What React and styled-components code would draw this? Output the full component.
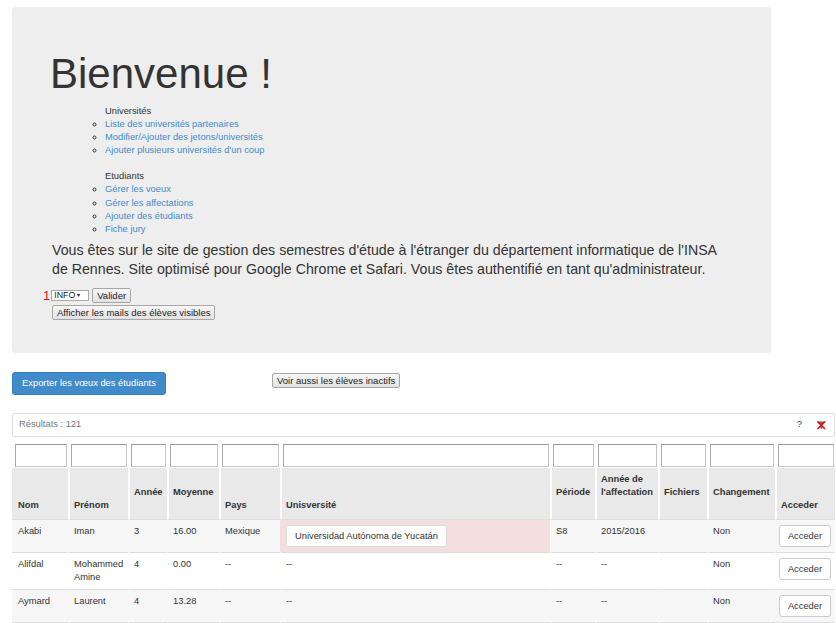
import React from "react";
import styled, { createGlobalStyle } from "styled-components";

const GlobalStyle = createGlobalStyle`
  * { box-sizing: border-box; }
  html { overflow: hidden; }
  html, body { margin: 0; padding: 0; background: #fff; }
  body {
    font-family: "Liberation Sans", Arial, sans-serif;
    font-size: 9.33px;
    line-height: 13.33px;
    color: #333;
  }
`;

const menu = [
  {
    title: "Universités",
    links: [
      "Liste des universités partenaires",
      "Modifier/Ajouter des jetons/universités",
      "Ajouter plusieurs universités d'un coup",
    ],
  },
  {
    title: "Etudiants",
    links: [
      "Gérer les voeux",
      "Gérer les affectations",
      "Ajouter des étudiants",
      "Fiche jury",
    ],
  },
];

const columns = [
  { label: "Nom", width: 56 },
  { label: "Prénom", width: 60 },
  { label: "Année", width: 39, raised: true },
  { label: "Moyenne", width: 52, raised: true },
  { label: "Pays", width: 61 },
  { label: "Unisversité", width: 270 },
  { label: "Période", width: 45, raised: true },
  { label: "Année de l'affectation", width: 63, raised: true },
  { label: "Fichiers", width: 49, raised: true },
  { label: "Changement", width: 68, raised: true },
  { label: "Acceder", width: 60 },
];

const students = [
  { nom: "Akabi", prenom: "Iman", annee: "3", moyenne: "16.00", pays: "Mexique", univ: "Universidad Autónoma de Yucatán", periode: "S8", affectation: "2015/2016", changement: "Non" },
  { nom: "Alifdal", prenom: "Mohammed Amine", annee: "4", moyenne: "0.00", pays: "--", univ: null, periode: "--", affectation: "--", changement: "Non" },
  { nom: "Aymard", prenom: "Laurent", annee: "4", moyenne: "13.28", pays: "--", univ: null, periode: "--", affectation: "--", changement: "Non" },
];

function ClearFilterIcon() {
  return (
    <svg width="11" height="10" viewBox="0 0 11 10">
      <path d="M1 1.5h8.5L6.3 5.2V9L4.3 8V5.2z" fill="#666" />
      <path d="M1.5 1.5l7.5 7.5M9 1.5L1.5 9" stroke="#e3101b" strokeWidth="1.7" />
    </svg>
  );
}

function App() {
  return (
    <Page>
      <GlobalStyle />
      <Jumbotron>
        <Title>Bienvenue !</Title>
        <Menu>
          {menu.map((group) => (
            <Group key={group.title}>
              <GroupTitle>{group.title}</GroupTitle>
              <LinkList>
                {group.links.map((l) => (
                  <li key={l}>
                    <a href="#">{l}</a>
                  </li>
                ))}
              </LinkList>
            </Group>
          ))}
        </Menu>
        <Lead>
          Vous êtes sur le site de gestion des semestres d'étude à l'étranger du
          département informatique de l'INSA de Rennes. Site optimisé pour Google
          Chrome et Safari. Vous êtes authentifié en tant qu'administrateur.
        </Lead>
        <Controls>
          <ControlRow>
            <Marker>1</Marker>
            <SelectBox>
              INFO <Caret>▾</Caret>
            </SelectBox>
            <NativeButton>Valider</NativeButton>
          </ControlRow>
          <ControlRow>
            <NativeButton>Afficher les mails des élèves visibles</NativeButton>
          </ControlRow>
        </Controls>
      </Jumbotron>

      <ActionsBar>
        <PrimaryButton>Exporter les vœux des étudiants</PrimaryButton>
        <NativeButton>Voir aussi les élèves inactifs</NativeButton>
      </ActionsBar>

      <ResultsPanel>
        <ResultsCount>Résultats : 121</ResultsCount>
        <PanelTools>
          <Help>?</Help>
          <ClearFilterIcon />
        </PanelTools>
      </ResultsPanel>

      <Table>
        <colgroup>
          {columns.map((c) => (
            <col key={c.label} style={{ width: c.width }} />
          ))}
        </colgroup>
        <thead>
          <tr>
            {columns.map((c) => (
              <FilterCell key={c.label}>
                <FilterInput />
              </FilterCell>
            ))}
          </tr>
          <tr>
            {columns.map((c) => (
              <HeadCell key={c.label} $raised={c.raised}>
                {c.label === "Année de l'affectation" ? (
                  <>
                    Année de
                    <br />
                    l'affectation
                  </>
                ) : (
                  c.label
                )}
              </HeadCell>
            ))}
          </tr>
        </thead>
        <tbody>
          {students.map((s, i) => (
            <Row key={s.nom} $striped={i % 2 === 0}>
              <Cell>{s.nom}</Cell>
              <Cell>{s.prenom}</Cell>
              <Cell>{s.annee}</Cell>
              <Cell>{s.moyenne}</Cell>
              <Cell>{s.pays}</Cell>
              <Cell $danger={!!s.univ}>
                {s.univ ? <UnivTag>{s.univ}</UnivTag> : "--"}
              </Cell>
              <Cell>{s.periode}</Cell>
              <Cell>{s.affectation}</Cell>
              <Cell />
              <Cell>{s.changement}</Cell>
              <Cell $tight>
                <DefaultButton>Acceder</DefaultButton>
              </Cell>
            </Row>
          ))}
        </tbody>
      </Table>
    </Page>
  );
}

export default App;

const Page = styled.div`
  width: 836px;
  padding: 7px 0 0 12px;
  overflow: hidden;
`;

const Jumbotron = styled.div`
  width: 759px;
  background: #eeeeee;
  border-radius: 4px;
  padding: 44px 40px 33px 40px;
`;

const Title = styled.h1`
  margin: 0 0 8px -2px;
  font-size: 42px;
  line-height: 46px;
  font-weight: normal;
  color: #333;
`;

const Menu = styled.div`
  margin-left: 53px;
  line-height: 13.1px;
  display: flex;
  flex-direction: column;
  gap: 13px;
`;

const Group = styled.div``;

const GroupTitle = styled.div`
  color: #333;
`;

const LinkList = styled.ul`
  margin: 0;
  padding: 0;
  list-style: circle;

  a {
    color: #428bca;
    text-decoration: none;
  }
`;

const Lead = styled.p`
  max-width: 676px;
  margin: 5px 0 8px;
  font-size: 14.2px;
  line-height: 19.5px;
  color: #333;
`;

const Controls = styled.div`
  display: flex;
  flex-direction: column;
  gap: 2px;
`;

const ControlRow = styled.div`
  display: flex;
  align-items: center;
  gap: 3px;
`;

const Marker = styled.span`
  margin-left: -9px;
  margin-right: -2px;
  font-size: 13px;
  line-height: 1;
  color: #e3101b;
`;

const SelectBox = styled.div`
  display: inline-flex;
  align-items: center;
  gap: 2px;
  height: 11px;
  width: 38px;
  padding: 0 2px;
  background: #fff;
  border: 1px solid #a9a9a9;
  font-size: 8.8px;
  line-height: 1;
  color: #222;
`;

const Caret = styled.span`
  font-size: 6px;
`;

const NativeButton = styled.button`
  height: 15px;
  padding: 0 4px;
  border: 1px solid #a6a6a6;
  border-radius: 2px;
  background: linear-gradient(#f7f7f7, #e2e2e2);
  font-family: "Liberation Sans", Arial, sans-serif;
  font-size: 9.5px;
  line-height: 1;
  color: #222;
  white-space: nowrap;
`;

const ActionsBar = styled.div`
  margin-top: 19px;
  display: grid;
  grid-template-columns: 260px auto;
  justify-items: start;
  align-items: start;

  ${NativeButton} {
    margin-top: 1px;
  }
`;

const PrimaryButton = styled.button`
  width: 154px;
  height: 23px;
  padding: 0;
  border: 1px solid #357ebd;
  border-radius: 3px;
  background: #428bca;
  color: #fff;
  font-family: "Liberation Sans", Arial, sans-serif;
  font-size: 9.33px;
`;

const ResultsPanel = styled.div`
  margin-top: 18px;
  width: 823px;
  height: 24px;
  display: flex;
  align-items: center;
  justify-content: space-between;
  padding: 0 7px 0 6px;
  border: 1px solid #dddddd;
  border-radius: 2px;
`;

const ResultsCount = styled.span`
  color: #777;
`;

const PanelTools = styled.div`
  display: flex;
  align-items: center;
  gap: 14px;
`;

const Help = styled.span`
  color: #345;
`;

const Table = styled.table`
  margin-top: 7px;
  width: 823px;
  table-layout: fixed;
  border-collapse: separate;
  border-spacing: 0;
`;

const FilterCell = styled.td`
  padding: 0 1px 1px 1px;
  border-left: 2px solid #fff;

  &:first-child {
    border-left: 0;
    padding-left: 3px;
  }
`;

const FilterInput = styled.input`
  display: block;
  width: 100%;
  height: 23px;
  border: 1px solid #c4c4c4;
  border-top-color: #9a9a9a;
  border-left-color: #aaaaaa;
  background: #fff;
`;

const HeadCell = styled.th`
  background: #e9e9e9;
  border-left: 2px solid #fff;
  padding: 5px 4px ${(p) => (p.$raised ? "19px" : "6px")};
  vertical-align: bottom;
  text-align: left;
  font-weight: bold;
  color: #333;

  &:first-child {
    border-left: 0;
    padding-left: 6px;
  }
`;

const Row = styled.tr`
  background: ${(p) => (p.$striped ? "#f6f6f6" : "#fff")};

  &:last-child td {
    border-bottom: 1px solid #dddddd;
  }
`;

const Cell = styled.td`
  padding: 5px ${(p) => (p.$tight ? "2px" : "4px")};
  vertical-align: top;
  border-top: 1px solid #dddddd;
  border-left: 2px solid transparent;
  background: ${(p) => (p.$danger ? "#f2dede" : "transparent")};
  color: #333;

  &:first-child {
    border-left: 0;
    padding-left: 6px;
  }
`;

const UnivTag = styled.span`
  display: inline-block;
  padding: 4px 8px 3px;
  background: #fff;
  border: 1px solid #dddddd;
  border-radius: 3px;
  white-space: nowrap;
`;

const DefaultButton = styled.button`
  width: 52px;
  height: 22px;
  padding: 0;
  background: #fff;
  border: 1px solid #cccccc;
  border-radius: 3px;
  font-family: "Liberation Sans", Arial, sans-serif;
  font-size: 9.33px;
  color: #333;
`;
